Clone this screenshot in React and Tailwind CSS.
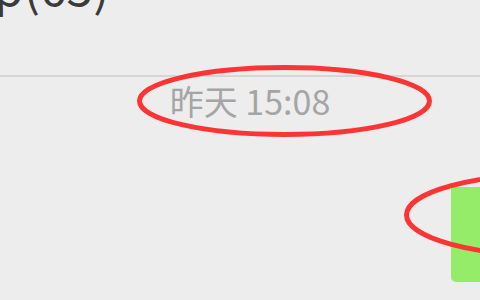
import React from "react";

const font = { fontFamily: '"Noto Sans CJK SC", "Noto Sans", sans-serif' };

function Annotations() {
  return (
    <svg
      className="absolute inset-0 pointer-events-none"
      width="480"
      height="300"
      viewBox="0 0 480 300"
    >
      <ellipse cx="284.5" cy="101" rx="145" ry="33.5" fill="none" stroke="#fd3434" strokeWidth="5" />
      <ellipse cx="560" cy="215" rx="153.5" ry="41.5" fill="none" stroke="#fd3434" strokeWidth="5" />
    </svg>
  );
}

export default function App() {
  return (
    <div
      className="relative w-[480px] h-[300px] overflow-hidden bg-[#ededed] flex flex-col"
      style={font}
    >
      <div className="h-[75px] overflow-hidden">
        <div className="-mt-[39px] -ml-[6px] text-[48px] leading-[48px] text-[#3a3a3a] whitespace-nowrap">
          p(65)
        </div>
      </div>
      <div className="h-[2px] bg-[#d6d6d6]" />
      <div className="mt-[5px] flex justify-center pl-[20px]">
        <span className="text-[34px] leading-[38px] text-[#a5a5a5] whitespace-nowrap">
          昨天 15:08
        </span>
      </div>
      <div className="mt-[67px] flex justify-end">
        <div className="w-[29px] h-[95px] bg-[#95ec69] rounded-bl-[5px]" />
      </div>
      <Annotations />
    </div>
  );
}
